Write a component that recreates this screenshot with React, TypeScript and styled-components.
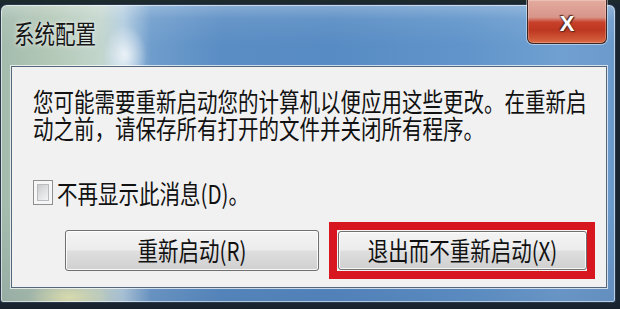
import React from "react";
import styled, { createGlobalStyle } from "styled-components";

const Global = createGlobalStyle`
  html, body { margin: 0; padding: 0; background: #1b2733; }
  body { font-family: "Noto Sans CJK SC", "Noto Sans", sans-serif; }
  * { box-sizing: border-box; }
`;

const Screen = styled.div`
  width: 620px;
  height: 309px;
  padding: 4px 5px 6px 0;
  background: linear-gradient(180deg, #1d2b2c 0px, #1a2733 5px, #1a2733 300px, #16212c 309px);
  overflow: hidden;
  display: flex;
`;

const Window = styled.div`
  flex: 1;
  display: flex;
  flex-direction: column;
  padding: 0 8px 14px 10px;
  border: 1px solid #2a3a4c;
  border-radius: 7px 7px 3px 3px;
  box-shadow: inset 0 0 0 1px rgba(255, 255, 255, 0.55);
  background:
    radial-gradient(ellipse 22px 30px at 124px 50px, rgba(255, 255, 255, 0.75), rgba(255, 255, 255, 0) 100%),
    radial-gradient(ellipse 40px 16px at 68px 292px, rgba(235, 230, 170, 0.7), rgba(235, 230, 170, 0) 100%),
    linear-gradient(180deg, rgba(255, 255, 255, 0.28) 0px, rgba(255, 255, 255, 0.08) 14px, rgba(255, 255, 255, 0) 40px, rgba(0, 0, 0, 0) 200px, rgba(0, 0, 40, 0.08) 100%),
    linear-gradient(90deg, #a3bbae 0px, #b3c8b6 50px, #c3d6cd 100px, #b3cde0 122px, #6f9dcc 150px, #5a8dc4 220px, #578bc3 330px, #6094ca 460px, #70a0d1 560px, #6b9acb 615px);
`;

const TitleBar = styled.div`
  height: 61px;
  display: flex;
  align-items: flex-start;
  justify-content: space-between;
`;

const Stretch = styled.span`
  display: inline-block;
  transform: scaleY(1.25);
`;

const Title = styled.div`
  margin-top: 15px;
  margin-left: 3px;
  font-size: 20.5px;
  line-height: 26px;
  color: #161616;
  text-shadow: 0 0 6px rgba(255, 255, 255, 0.7), 0 0 2px rgba(255, 255, 255, 0.6);
`;

const CloseButton = styled.div`
  margin-top: -5px;
  width: 80px;
  height: 44px;
  border: 1px solid #3d2623;
  border-top: none;
  border-radius: 0 0 6px 6px;
  box-shadow: 0 0 0 1px rgba(255, 255, 255, 0.45), inset 0 0 0 1px rgba(255, 255, 255, 0.25);
  background: linear-gradient(180deg, #e3ab9e 0%, #d8958a 40%, #c8402a 52%, #bd3720 70%, #cf5636 90%, #d96c46 100%);
  display: flex;
  align-items: center;
  justify-content: center;
  font-family: "Liberation Sans", Arial, sans-serif;
  font-weight: bold;
  font-size: 22px;
  color: #ffffff;
  text-shadow: 0 0 2px #5a2a20, 1px 1px 1px #5a2a20, -1px -1px 1px #5a2a20;
  padding-top: 4px;
`;

const Panel = styled.div`
  flex: 1;
  display: flex;
  flex-direction: column;
  padding: 19px 11px 0 21px;
  background: #f1f1f1;
  border: 1px solid #55677a;
  box-shadow: 0 0 0 1px rgba(255, 255, 255, 0.7);
  color: #111;
`;

const Message = styled.p`
  margin: 0;
  width: 560px;
  font-size: 20.5px;
  line-height: 20.8px;
  transform: scaleY(1.25);
  transform-origin: 0 0;
  padding-top: 2px;
`;

const CheckRow = styled.label`
  margin-top: 50px;
  display: flex;
  align-items: center;
  gap: 4px;
  height: 26px;
  font-size: 20.5px;
  line-height: 26px;
`;

const Box = styled.span`
  width: 20px;
  height: 25px;
  border: 1px solid #8d8f91;
  background: #f6f6f6;
  padding: 3px;
  display: flex;
  & > span {
    flex: 1;
    border: 1px solid #b9bcbf;
    background: linear-gradient(135deg, #c9cbcd 0%, #e2e3e4 55%, #f4f4f4 100%);
  }
`;

const ButtonRow = styled.div`
  margin-top: 16px;
  margin-left: 32px;
  display: flex;
  align-items: center;
  gap: 10px;
`;

const Button = styled.div<{ $w: number; $h: number }>`
  width: ${(p) => p.$w}px;
  height: ${(p) => p.$h}px;
  border: 1px solid #707070;
  border-radius: 3px;
  box-shadow: inset 0 0 0 1px rgba(255, 255, 255, 0.85);
  background: linear-gradient(180deg, #f4f4f4 0%, #ececec 48%, #dedede 52%, #d0d0d0 100%);
  display: flex;
  align-items: center;
  justify-content: center;
  font-size: 20.5px;
  line-height: 26px;
  color: #111;
`;

const Highlight = styled.div`
  border: 8px solid #d8161f;
  padding: 1px 0 1px 1px;
  background: #f3f3f3;
  display: flex;
`;

export default function App() {
  return (
    <>
      <Global />
      <Screen>
        <Window>
          <TitleBar>
            <Title>
              <Stretch>系统配置</Stretch>
            </Title>
            <CloseButton>X</CloseButton>
          </TitleBar>
          <Panel>
            <Message>
              您可能需要重新启动您的计算机以便应用这些更改。在重新启动之前，请保存所有打开的文件并关闭所有程序。
            </Message>
            <CheckRow>
              <Box>
                <span />
              </Box>
              <Stretch>不再显示此消息(D)。</Stretch>
            </CheckRow>
            <ButtonRow>
              <Button $w={254} $h={41}>
                <Stretch>重新启动(R)</Stretch>
              </Button>
              <Highlight>
                <Button $w={249} $h={39}>
                  <Stretch>退出而不重新启动(X)</Stretch>
                </Button>
              </Highlight>
            </ButtonRow>
          </Panel>
        </Window>
      </Screen>
    </>
  );
}
